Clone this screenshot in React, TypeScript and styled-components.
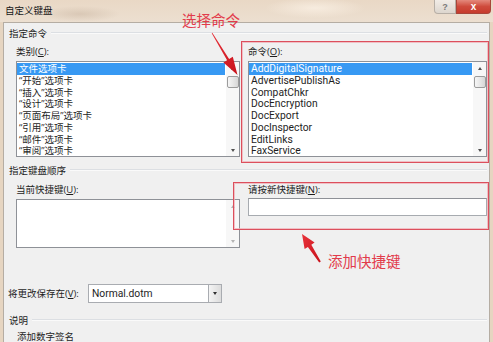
import React from "react";
import styled, { createGlobalStyle } from "styled-components";

const Global = createGlobalStyle`
  html, body { margin: 0; padding: 0; overflow: hidden; }
  body { font-family: "Open Sans", "Noto Sans CJK SC", sans-serif; }
`;

const UI = `"Open Sans", "Noto Sans CJK SC", sans-serif`;
const CJK = `"Noto Sans CJK SC", sans-serif`;
const EN = `Roboto, "Liberation Sans", sans-serif`;

const Page = styled.div`
  position: relative;
  width: 493px;
  height: 342px;
  overflow: hidden;
  background: #e6d5c1;
  display: flex;
  flex-direction: column;
  color: #1e1e1e;
`;

const TitleBar = styled.div`
  height: 22px;
  flex: none;
  display: flex;
  align-items: flex-start;
  padding-left: 5px;
  background:
    radial-gradient(ellipse 40px 8px at 80px 14px, rgba(200, 180, 160, 0.5), transparent),
    radial-gradient(ellipse 50px 10px at 315px 8px, rgba(250, 240, 228, 0.8), transparent),
    linear-gradient(180deg, #e9d8c5 0%, #ecdfd0 100%);
`;

const Title = styled.div`
  font-family: ${CJK};
  font-size: 9.5px;
  line-height: 20px;
  color: #161616;
`;

const CaptionButtons = styled.div`
  margin-left: auto;
  margin-right: 2px;
  display: flex;
`;

const CapBtn = styled.div<{ $close?: boolean }>`
  width: ${(p) => (p.$close ? 35 : 22)}px;
  height: 14px;
  box-sizing: border-box;
  display: flex;
  align-items: center;
  justify-content: center;
  font-family: "Liberation Sans", sans-serif;
  font-weight: bold;
  font-size: ${(p) => (p.$close ? 10 : 9)}px;
  line-height: 12px;
  color: ${(p) => (p.$close ? "#fff" : "#7a7a7a")};
  border: 1px solid ${(p) => (p.$close ? "#a8463a" : "#b7afa6")};
  border-top: none;
  border-radius: ${(p) => (p.$close ? "0 0 4px 0" : "0 0 0 4px")};
  background: ${(p) =>
    p.$close
      ? "linear-gradient(180deg, #e4897c 0%, #cf4b3c 50%, #c63b2d 100%)"
      : "linear-gradient(180deg, #f1ece6 0%, #ddd6ce 100%)"};
`;

const Client = styled.div`
  flex: 1;
  margin: 0 3px;
  border: 1px solid #b5ada3;
  border-bottom: none;
  background: #f0f0f0;
  display: flex;
  flex-direction: column;
`;

const GroupHeader = styled.div<{ $top: number }>`
  margin-top: ${(p) => p.$top}px;
  height: 12px;
  padding-left: 5px;
  padding-right: 2px;
  display: flex;
  align-items: center;
  gap: 4px;
  font-family: ${CJK};
  font-size: 9.5px;
  line-height: 12px;
  &::after {
    content: "";
    flex: 1;
    height: 1px;
    background: #dcdfe3;
    border-bottom: 1px solid #fafafa;
  }
`;

const Columns = styled.div<{ $top: number }>`
  margin-top: ${(p) => p.$top}px;
  padding-left: 12px;
  display: grid;
  grid-template-columns: 224px 239px;
  column-gap: 8px;
  align-items: start;
`;

const Column = styled.div`
  display: flex;
  flex-direction: column;
`;

const Label = styled.div<{ $gap?: number }>`
  font-family: ${UI};
  font-size: 9.5px;
  line-height: 12px;
  height: 12px;
  white-space: nowrap;
  margin-bottom: ${(p) => p.$gap ?? 3}px;
  u { text-decoration: underline; }
`;

const ListBox = styled.div<{ $h: number }>`
  height: ${(p) => p.$h}px;
  box-sizing: border-box;
  border: 1px solid #8e9197;
  background: #fff;
  display: flex;
`;

const Items = styled.div`
  flex: 1;
  padding-top: 1px;
  overflow: hidden;
`;

const Item = styled.div<{ $sel?: boolean; $en?: boolean }>`
  height: 11.75px;
  line-height: 11.75px;
  overflow: hidden;
  padding-left: 2px;
  white-space: nowrap;
  font-family: ${(p) => (p.$en ? EN : UI)};
  font-size: ${(p) => (p.$en ? 10.3 : 9.5)}px;
  color: ${(p) => (p.$sel ? "#fff" : "#1e1e1e")};
  background: ${(p) => (p.$sel ? "#3799f3" : "transparent")};
  margin-right: ${(p) => (p.$sel ? 1 : 0)}px;
`;

const ScrollBar = styled.div`
  width: 13px;
  flex: none;
  background: #f7f7f7;
  display: flex;
  flex-direction: column;
  align-items: center;
`;

const ArrowBtn = styled.div<{ $down?: boolean; $dim?: boolean }>`
  height: 12px;
  width: 13px;
  display: flex;
  align-items: center;
  justify-content: center;
  margin-top: ${(p) => (p.$down ? "auto" : "0")};
  &::before {
    content: "";
    width: 0;
    height: 0;
    border-left: 2.5px solid transparent;
    border-right: 2.5px solid transparent;
    ${(p) =>
      p.$down
        ? `border-top: 3px solid ${p.$dim ? "#b4b4b4" : "#505050"};`
        : `border-bottom: 3px solid ${p.$dim ? "#b4b4b4" : "#505050"};`}
  }
`;

const Thumb = styled.div`
  margin-top: 2px;
  width: 12px;
  height: 12px;
  box-sizing: border-box;
  border: 1px solid #9c9c9c;
  border-radius: 2px;
  background: linear-gradient(90deg, #f6f6f6 0%, #e4e4e4 60%, #d6d6d6 100%);
`;

const TextBox = styled.div`
  height: 18px;
  box-sizing: border-box;
  border: 1px solid #a7abb0;
  border-top-color: #8e9197;
  background: #fff;
`;

const SaveRow = styled.div`
  margin-top: 36px;
  padding-left: 4px;
  display: grid;
  grid-template-columns: 80px 134px;
  align-items: center;
  height: 19px;
`;

const SaveLabel = styled.div`
  font-family: ${UI};
  font-size: 9.5px;
  line-height: 12px;
  white-space: nowrap;
`;

const Combo = styled.div`
  height: 19px;
  box-sizing: border-box;
  border: 1px solid #a9acb1;
  background: #fff;
  display: flex;
  align-items: center;
`;

const ComboText = styled.div`
  flex: 1;
  padding-left: 3px;
  font-family: ${EN};
  font-size: 10.3px;
  line-height: 17px;
`;

const ComboButton = styled.div`
  width: 13px;
  height: 17px;
  box-sizing: border-box;
  border-left: 1px solid #a9acb1;
  background: linear-gradient(90deg, #f4f4f4, #dcdcdc);
  display: flex;
  align-items: center;
  justify-content: center;
  &::before {
    content: "";
    border-left: 2.5px solid transparent;
    border-right: 2.5px solid transparent;
    border-top: 3px solid #303030;
  }
`;

const DescText = styled.div`
  margin-top: 4px;
  padding-left: 13px;
  font-family: ${CJK};
  font-size: 9.5px;
  line-height: 12px;
`;

const RedBox = styled.div<{ $x: number; $y: number; $w: number; $h: number }>`
  position: absolute;
  left: ${(p) => p.$x}px;
  top: ${(p) => p.$y}px;
  width: ${(p) => p.$w}px;
  height: ${(p) => p.$h}px;
  box-sizing: border-box;
  border: 1px solid #dc4f5c;
  box-shadow: inset 0 0 0 1px rgba(240, 170, 178, 0.7);
  pointer-events: none;
`;

const Note = styled.div<{ $x: number; $y: number }>`
  position: absolute;
  left: ${(p) => p.$x}px;
  top: ${(p) => p.$y}px;
  font-family: ${CJK};
  font-size: 14.5px;
  line-height: 18px;
  color: #e23b4b;
  white-space: nowrap;
`;

const Overlay = styled.svg`
  position: absolute;
  left: 0;
  top: 0;
  pointer-events: none;
`;

const categories = [
  "文件选项卡",
  "“开始”选项卡",
  "“插入”选项卡",
  "“设计”选项卡",
  "“页面布局”选项卡",
  "“引用”选项卡",
  "“邮件”选项卡",
  "“审阅”选项卡",
];

const commands = [
  "AddDigitalSignature",
  "AdvertisePublishAs",
  "CompatChkr",
  "DocEncryption",
  "DocExport",
  "DocInspector",
  "EditLinks",
  "FaxService",
];

export default function App() {
  return (
    <Page>
      <Global />
      <TitleBar>
        <Title>自定义键盘</Title>
        <CaptionButtons>
          <CapBtn>?</CapBtn>
          <CapBtn $close>x</CapBtn>
        </CaptionButtons>
      </TitleBar>
      <Client>
        <GroupHeader $top={4}>指定命令</GroupHeader>
        <Columns $top={7}>
          <Column>
            <Label>
              类别(<u>C</u>):
            </Label>
            <ListBox $h={96}>
              <Items>
                {categories.map((c, i) => (
                  <Item key={c} $sel={i === 0}>
                    {c}
                  </Item>
                ))}
              </Items>
              <ScrollBar>
                <ArrowBtn />
                <Thumb />
                <ArrowBtn $down />
              </ScrollBar>
            </ListBox>
          </Column>
          <Column>
            <Label>
              命令(<u>O</u>):
            </Label>
            <ListBox $h={96}>
              <Items>
                {commands.map((c, i) => (
                  <Item key={c} $sel={i === 0} $en>
                    {c}
                  </Item>
                ))}
              </Items>
              <ScrollBar>
                <ArrowBtn />
                <Thumb />
                <ArrowBtn $down />
              </ScrollBar>
            </ListBox>
          </Column>
        </Columns>
        <GroupHeader $top={7}>指定键盘顺序</GroupHeader>
        <Columns $top={8}>
          <Column>
            <Label>
              当前快捷键(<u>U</u>):
            </Label>
            <ListBox $h={49}>
              <Items />
              <ScrollBar>
                <ArrowBtn $dim />
                <ArrowBtn $down $dim />
              </ScrollBar>
            </ListBox>
          </Column>
          <Column>
            <Label $gap={2}>
              请按新快捷键(<u>N</u>):
            </Label>
            <TextBox />
          </Column>
        </Columns>
        <SaveRow>
          <SaveLabel>
            将更改保存在(<u>V</u>):
          </SaveLabel>
          <Combo>
            <ComboText>Normal.dotm</ComboText>
            <ComboButton />
          </Combo>
        </SaveRow>
        <GroupHeader $top={11}>说明</GroupHeader>
        <DescText>添加数字签名</DescText>
      </Client>

      <RedBox $x={241} $y={41} $w={248} $h={122} />
      <RedBox $x={233} $y={182} $w={256} $h={48} />
      <Note $x={182} $y={11}>选择命令</Note>
      <Note $x={328} $y={252}>添加快捷键</Note>
      <Overlay width={493} height={342} viewBox="0 0 493 342">
        <defs>
          <linearGradient id="arr" x1="0" y1="0" x2="1" y2="1">
            <stop offset="0" stopColor="#e8323a" />
            <stop offset="1" stopColor="#c8121c" />
          </linearGradient>
        </defs>
        <polygon
          points="212.3,32.8 229.1,59 232.8,56.7 237.5,75 223.4,62.5 227.1,60.2 211.7,33.2"
          fill="url(#arr)"
        />
        <polygon
          points="320.8,261.5 311.3,244.7 314.6,242.6 302,234 304.6,249 307.9,246.9 319.2,262.5"
          fill="url(#arr)"
        />
      </Overlay>
    </Page>
  );
}
